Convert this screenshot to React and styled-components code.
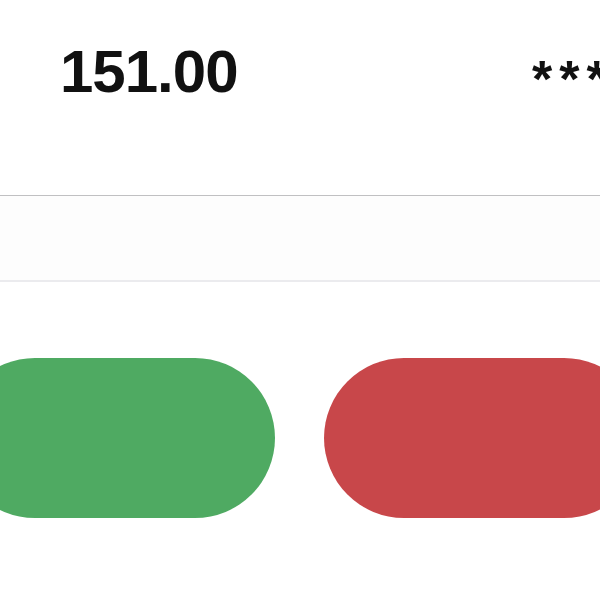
import React from 'react'
import styled, { createGlobalStyle } from 'styled-components'

const GlobalStyle = createGlobalStyle`
html, body {
margin:0;
padding:0;
background:#fff;
overflow:hidden;
}
body{
font-family:"Liberation Sans", Arial, sans-serif;
}
`

const Page = styled.section`
width:600px;
height:600px;
overflow:hidden;
background:#fff;
`

const Header = styled.div`
display:flex;
align-items:flex-start;
height:195px;
padding:42px 0 0 60px;
box-sizing:border-box;
`

const Amount = styled.h1`
margin:0;
font-size:60px;
font-weight:700;
color:#111;
letter-spacing:-1px;
line-height:1;
`

const Hidden = styled.span`
flex-shrink:0;
margin-left:auto;
margin-right:-41px;
padding-top:11px;
font-size:52px;
font-weight:700;
color:#111;
letter-spacing:7px;
line-height:1;
white-space:nowrap;
`

const Divider = styled.div`
height:${p => p.thick}px;
background:${p => p.color};
`

const Band = styled.div`
height:84px;
background:#fdfdfd;
`

const Actions = styled.div`
display:flex;
gap:49px;
margin-top:76px;
margin-left:-45px;
`

const Pill = styled.button`
flex:0 0 320px;
height:160px;
border:none;
border-radius:80px;
background:${p => p.color};
`

const Trade = () => {
  return (
    <Page>
      <GlobalStyle />
      <Header>
        <Amount>151.00</Amount>
        <Hidden>****</Hidden>
      </Header>
      <Divider thick={1} color="#c0c0c2" />
      <Band />
      <Divider thick={2} color="#ebebee" />
      <Actions>
        <Pill color="#4faa62" />
        <Pill color="#c8474a" />
      </Actions>
    </Page>
  )
}

export default Trade
